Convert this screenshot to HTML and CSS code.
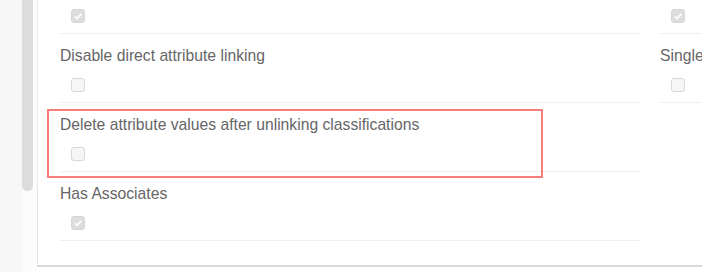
FILE: index.html
```html
<!DOCTYPE html>
<html lang="en">
<head>
  <meta charset="UTF-8" />
  <title>Settings</title>
  <link rel="stylesheet" href="styles.css">
</head>
<body>
  <div class="page">
    <div class="rail">
      <div class="scroll-thumb"></div>
    </div>
    <div class="panel">
      <div class="fields">
        <div class="column">
          <div class="field">
            <div class="label">Allow attribute inheritance</div>
            <span class="box checked"><svg viewBox="0 0 14 14"><path d="M3.3 7.3l2.6 2.6 4.9-5.4" fill="none" stroke="#fff" stroke-width="2"/></svg></span>
          </div>
          <div class="field">
            <div class="label">Disable direct attribute linking</div>
            <span class="box"></span>
          </div>
          <div class="field">
            <div class="highlight"></div>
            <div class="label">Delete attribute values after unlinking classifications</div>
            <span class="box"></span>
          </div>
          <div class="field">
            <div class="label">Has Associates</div>
            <span class="box checked"><svg viewBox="0 0 14 14"><path d="M3.3 7.3l2.6 2.6 4.9-5.4" fill="none" stroke="#fff" stroke-width="2"/></svg></span>
          </div>
        </div>
        <div class="column">
          <div class="field">
            <div class="label">Multiple values</div>
            <span class="box checked"><svg viewBox="0 0 14 14"><path d="M3.3 7.3l2.6 2.6 4.9-5.4" fill="none" stroke="#fff" stroke-width="2"/></svg></span>
          </div>
          <div class="field">
            <div class="label">Single classification only</div>
            <span class="box"></span>
          </div>
        </div>
      </div>
    </div>
  </div>
</body>
</html>
```

FILE: styles.css
```css
body {
  margin: 0;
  font-family: "Liberation Sans", Arial, sans-serif;
  background: #fff;
  overflow: hidden;
}
.page {
  display: flex;
  height: 272px;
}
.rail {
  width: 37px;
  flex-shrink: 0;
  background: linear-gradient(to right, #f7f7f7 22px, #fcfcfc 22px);
}
.scroll-thumb {
  margin-left: 22px;
  width: 11px;
  height: 191px;
  background: #dcdcdc;
  border-radius: 0 0 6px 6px;
}
.panel {
  flex: 1;
  height: 265px;
  border-left: 1px solid #e6e6e6;
  border-bottom: 2px solid #d9d9d9;
  background: #fff;
  overflow: hidden;
}
.fields {
  display: grid;
  grid-template-columns: 581px 1fr;
  column-gap: 19px;
  padding-left: 22px;
  margin-top: -35px;
}
.field {
  position: relative;
  padding: 12px 0 10px;
  border-bottom: 1px solid #f0f0f0;
}
.label {
  font-size: 15.7px;
  line-height: 20px;
  color: #666;
  white-space: nowrap;
}
.box {
  display: block;
  box-sizing: border-box;
  width: 14px;
  height: 14px;
  margin: 12px 0 0 11px;
  border: 1px solid #d8d8d8;
  border-radius: 3px;
  background: #f6f6f6;
}
.box.checked {
  background: #dddddd;
  border-color: #d6d6d6;
}
.box svg {
  display: block;
  width: 12px;
  height: 12px;
}
.highlight {
  position: absolute;
  left: -13px;
  top: 6px;
  width: 492px;
  height: 65px;
  border: 2px solid #f77c7c;
}
```
